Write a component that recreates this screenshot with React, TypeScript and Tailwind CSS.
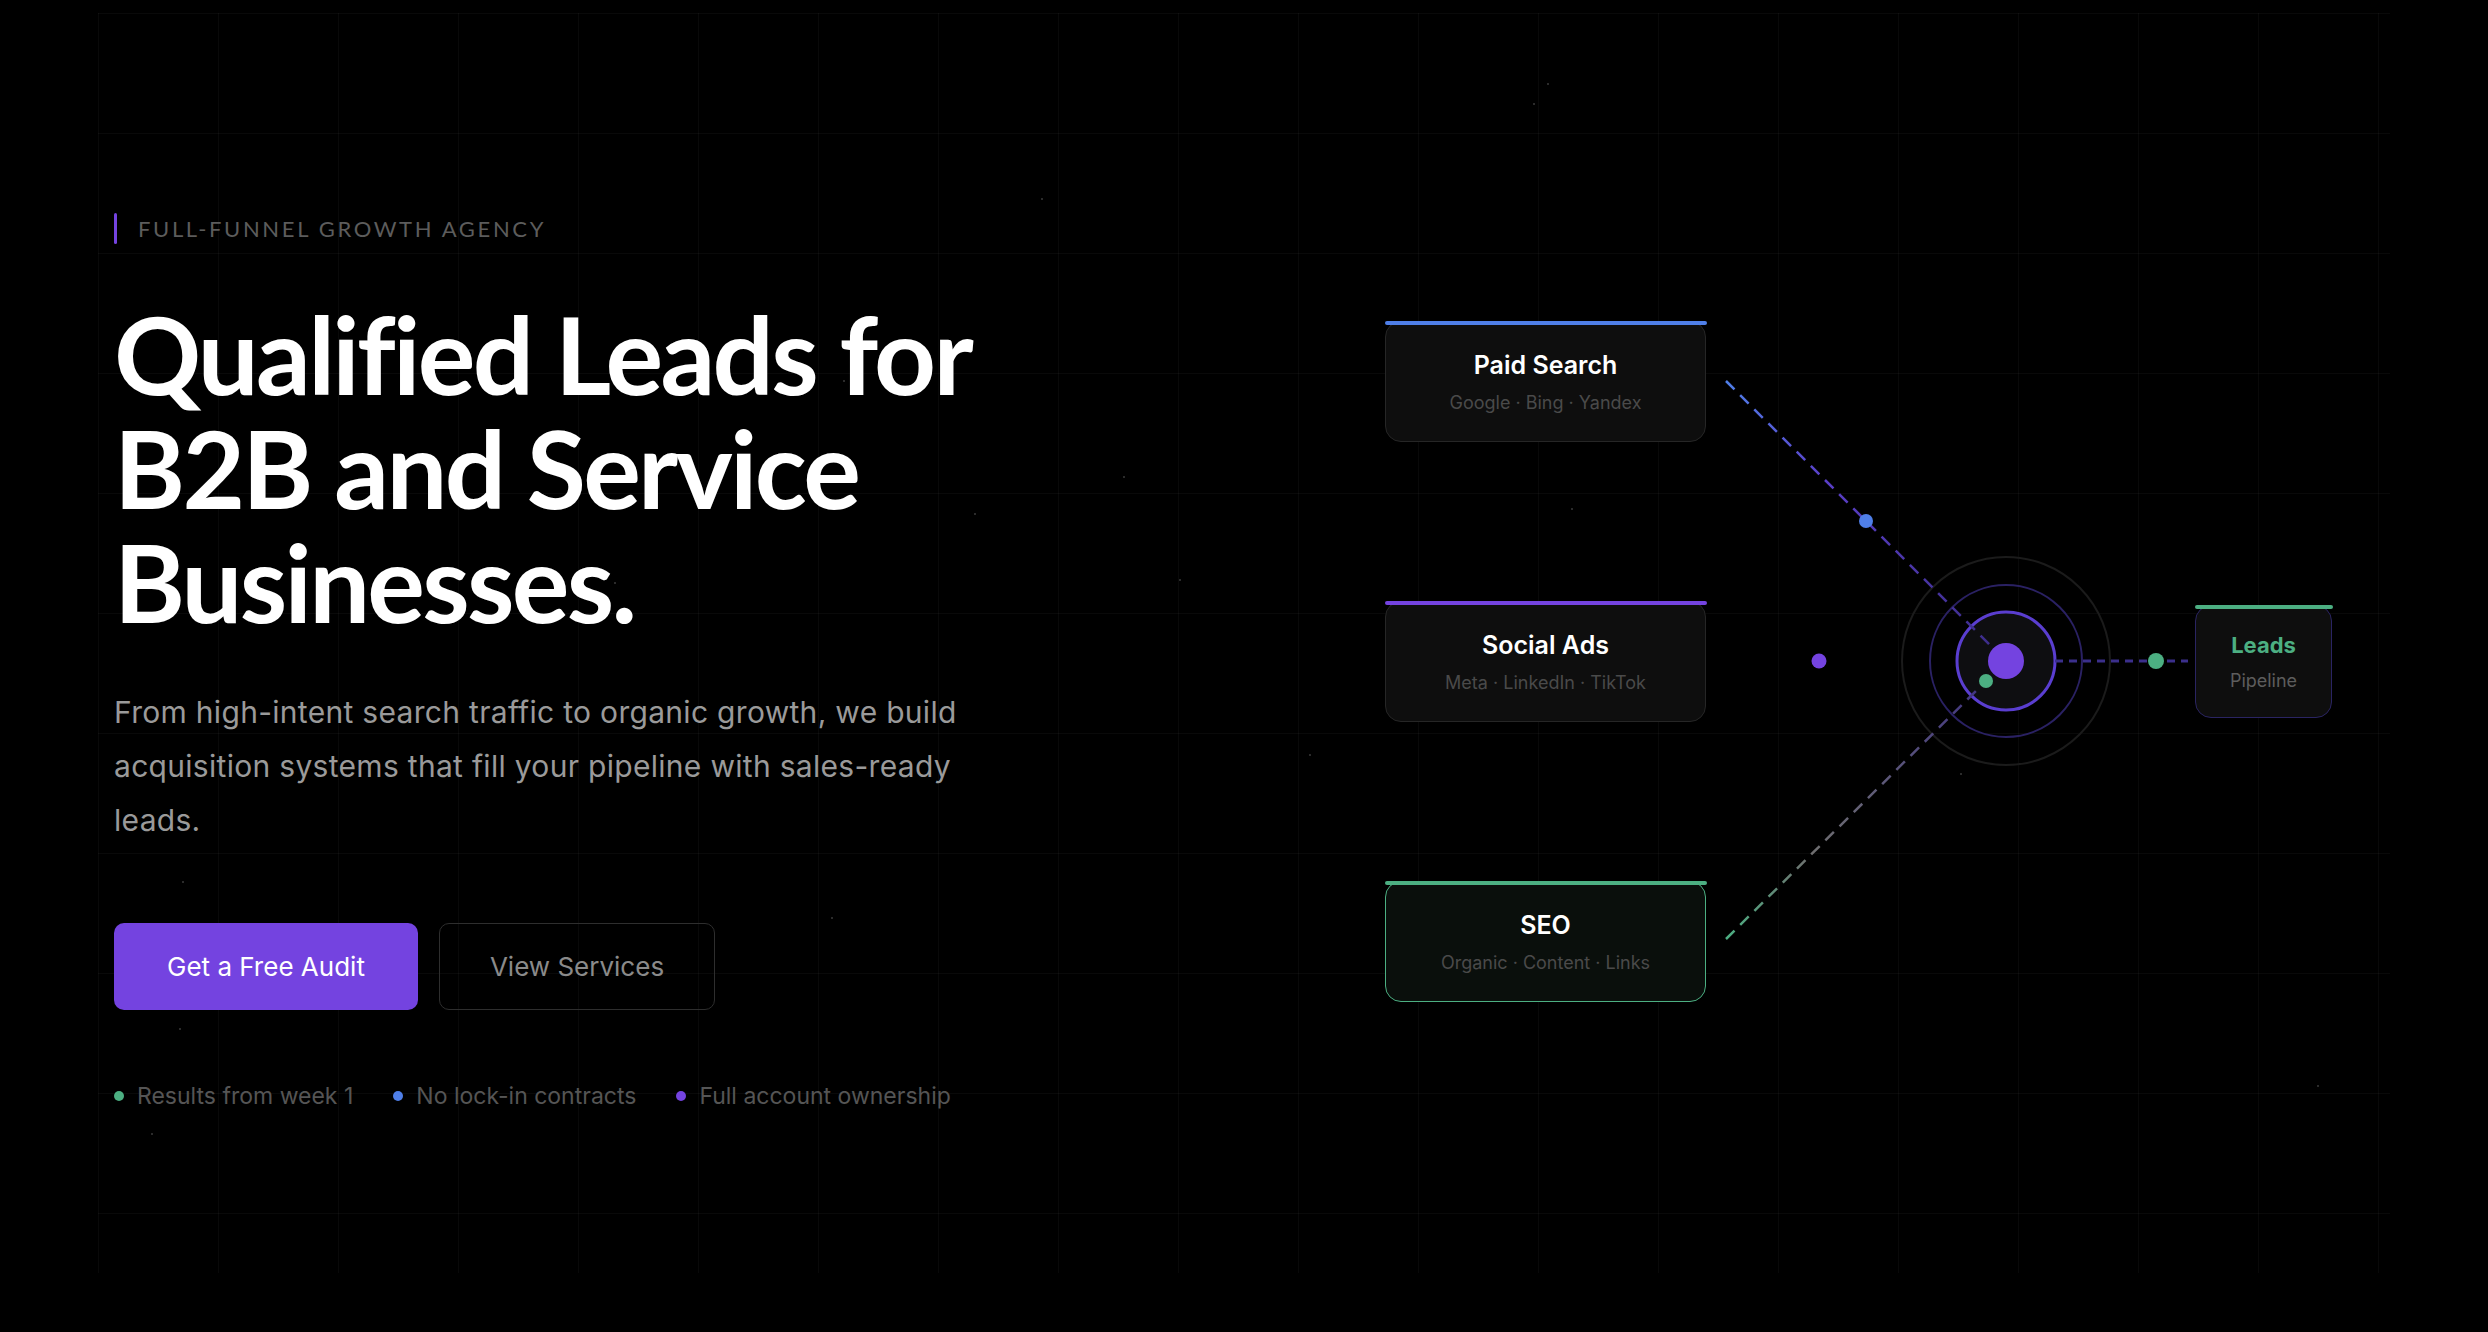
const particles = [
  "left-[1547px] top-[83px]",
  "left-[1533px] top-[103px]",
  "left-[1041px] top-[198px]",
  "left-[1571px] top-[508px]",
  "left-[1179px] top-[579px]",
  "left-[974px] top-[513px]",
  "left-[1123px] top-[476px]",
  "left-[182px] top-[881px]",
  "left-[831px] top-[917px]",
  "left-[179px] top-[1028px]",
  "left-[151px] top-[1133px]",
  "left-[1960px] top-[773px]",
  "left-[2317px] top-[1085px]",
  "left-[1309px] top-[754px]",
  "left-[614px] top-[582px]",
  "left-[843px] top-[380px]",
];

const perks = [
  { label: "Results from week 1", dot: "bg-[#4caf82]" },
  { label: "No lock-in contracts", dot: "bg-[#4f7fe8]" },
  { label: "Full account ownership", dot: "bg-[#7443e0]" },
];

type Channel = {
  title: string;
  subtitle: string;
  top: string;
  bar: string;
  tone: string;
};

const channels: Channel[] = [
  {
    title: "Paid Search",
    subtitle: "Google · Bing · Yandex",
    top: "top-0",
    bar: "bg-[#4f7fe8]",
    tone: "border-[#262626] bg-[#0e0e0e]",
  },
  {
    title: "Social Ads",
    subtitle: "Meta · LinkedIn · TikTok",
    top: "top-[280px]",
    bar: "bg-[#7443e0]",
    tone: "border-[#262626] bg-[#0e0e0e]",
  },
  {
    title: "SEO",
    subtitle: "Organic · Content · Links",
    top: "top-[560px]",
    bar: "bg-[#4caf82]",
    tone: "border-[#4caf82] bg-[#0a0f0c]",
  },
];

function HeroCopy() {
  return (
    <div className="flex flex-col">
      <div className="flex h-[31px] items-center gap-[21px]">
        <span className="h-[31px] w-[3px] rounded-full bg-[#7443e0]" />
        <span className="text-[22px] uppercase tracking-[0.12em] text-[#5c5c5c]">
          Full-Funnel Growth Agency
        </span>
      </div>

      <h1 className="mt-[52px] max-w-[960px] text-[108px] font-bold leading-[114px] tracking-[-0.025em] text-white">
        Qualified Leads for B2B and Service Businesses.
      </h1>

      <p className="mt-[47px] max-w-[880px] text-[30px] leading-[54px] tracking-[0.01em] text-[#9a9a9a] [font-family:Inter,sans-serif]">
        From high-intent search traffic to organic growth, we build acquisition
        systems that fill your pipeline with sales-ready leads.
      </p>

      <div className="mt-[76px] flex gap-[21px] [font-family:Inter,sans-serif]">
        <button className="flex h-[87px] items-center rounded-[10px] bg-[#7443e0] px-[53px] text-[26px] text-white">
          Get a Free Audit
        </button>
        <button className="flex h-[87px] items-center rounded-[10px] border border-[#2e2e2e] px-[50px] text-[26px] text-[#8a8a8a]">
          View Services
        </button>
      </div>

      <ul className="mt-[71px] flex h-[30px] items-center gap-[40px] [font-family:Inter,sans-serif]">
        {perks.map((perk) => (
          <li key={perk.label} className="flex items-center gap-[13px]">
            <span className={`h-[10px] w-[10px] rounded-full ${perk.dot}`} />
            <span className="text-[23px] leading-[30px] text-[#555555]">
              {perk.label}
            </span>
          </li>
        ))}
      </ul>
    </div>
  );
}

function ChannelCard({ channel }: { channel: Channel }) {
  return (
    <div
      className={`absolute left-0 flex h-[121px] w-[321px] flex-col items-center justify-center gap-[10px] rounded-[16px] border-[1.5px] ${channel.top} ${channel.tone}`}
    >
      <span
        className={`absolute -left-[1.5px] -right-[1.5px] -top-[1.5px] h-[4px] rounded-full ${channel.bar}`}
      />
      <span className="text-[25px] font-semibold leading-[32px] text-white">
        {channel.title}
      </span>
      <span className="text-[18px] leading-[24px] text-[#4a4a4a]">
        {channel.subtitle}
      </span>
    </div>
  );
}

function FunnelDiagram() {
  return (
    <div className="relative h-[682px] w-[947px] shrink-0 [font-family:Inter,sans-serif]">
      <svg
        className="absolute inset-0"
        width="947"
        height="682"
        viewBox="0 0 947 682"
        fill="none"
      >
        <defs>
          <linearGradient
            id="paid-line"
            gradientUnits="userSpaceOnUse"
            x1="341"
            y1="60"
            x2="621"
            y2="340"
          >
            <stop offset="0" stopColor="#4f7fe8" />
            <stop offset="0.35" stopColor="#5a3fc8" />
            <stop offset="1" stopColor="#3a2b85" />
          </linearGradient>
          <linearGradient
            id="seo-line"
            gradientUnits="userSpaceOnUse"
            x1="341"
            y1="618"
            x2="621"
            y2="340"
          >
            <stop offset="0" stopColor="#4caf82" />
            <stop offset="0.3" stopColor="#6f6f6f" />
            <stop offset="0.55" stopColor="#5e5a78" />
            <stop offset="1" stopColor="#3a2b85" />
          </linearGradient>
        </defs>

        <circle cx="621" cy="340" r="104" stroke="#1b1b1b" strokeWidth="2" />
        <circle cx="621" cy="340" r="76" stroke="#2a2163" strokeWidth="2" />
        <circle
          cx="621"
          cy="340"
          r="49"
          fill="#0e0e11"
          stroke="#5a3ed0"
          strokeWidth="3"
        />

        <line
          x1="341"
          y1="60"
          x2="608"
          y2="327"
          stroke="url(#paid-line)"
          strokeWidth="2.5"
          strokeDasharray="12 8"
        />
        <line
          x1="341"
          y1="618"
          x2="608"
          y2="353"
          stroke="url(#seo-line)"
          strokeWidth="2.5"
          strokeDasharray="12 8"
        />
        <line
          x1="670"
          y1="340"
          x2="803"
          y2="340"
          stroke="#3b2f8c"
          strokeWidth="3"
          strokeDasharray="8 6"
        />

        <circle cx="621" cy="340" r="18" fill="#7443e0" />
        <circle cx="601" cy="360" r="7" fill="#4caf82" />
        <circle cx="481" cy="200" r="7" fill="#4f7fe8" />
        <circle cx="434" cy="340" r="7.5" fill="#7443e0" />
        <circle cx="771" cy="340" r="8" fill="#4caf82" />
      </svg>

      {channels.map((channel) => (
        <ChannelCard key={channel.title} channel={channel} />
      ))}

      <div className="absolute left-[810px] top-[284px] flex h-[113px] w-[137px] flex-col items-center justify-center gap-[10px] rounded-[16px] border-[1.5px] border-[#2a2462] bg-[#0e0e0e]">
        <span className="absolute -left-[1.5px] -right-[1.5px] -top-[1.5px] h-[4px] rounded-full bg-[#4caf82]" />
        <span className="text-[22px] font-bold leading-[28px] text-[#4caf82]">
          Leads
        </span>
        <span className="text-[18px] leading-[24px] text-[#5d5d5d]">
          Pipeline
        </span>
      </div>
    </div>
  );
}

export default function App() {
  return (
    <main className="relative h-screen w-full overflow-hidden bg-black text-white [font-family:Lato,'Noto_Sans',sans-serif]">
      {/* faint background grid */}
      <div className="pointer-events-none absolute bottom-[59px] left-[98px] right-[98px] top-[13px] bg-[linear-gradient(to_right,rgba(255,255,255,0.035)_1px,transparent_1px),linear-gradient(to_bottom,rgba(255,255,255,0.035)_1px,transparent_1px)] [background-size:120px_120px]" />

      {particles.map((pos) => (
        <span
          key={pos}
          className={`pointer-events-none absolute h-[2px] w-[2px] rounded-full bg-[#3a3a3a] ${pos}`}
        />
      ))}

      <div className="relative flex h-full items-center justify-between pb-[8px] pl-[114px] pr-[156px]">
        <HeroCopy />
        <FunnelDiagram />
      </div>
    </main>
  );
}
